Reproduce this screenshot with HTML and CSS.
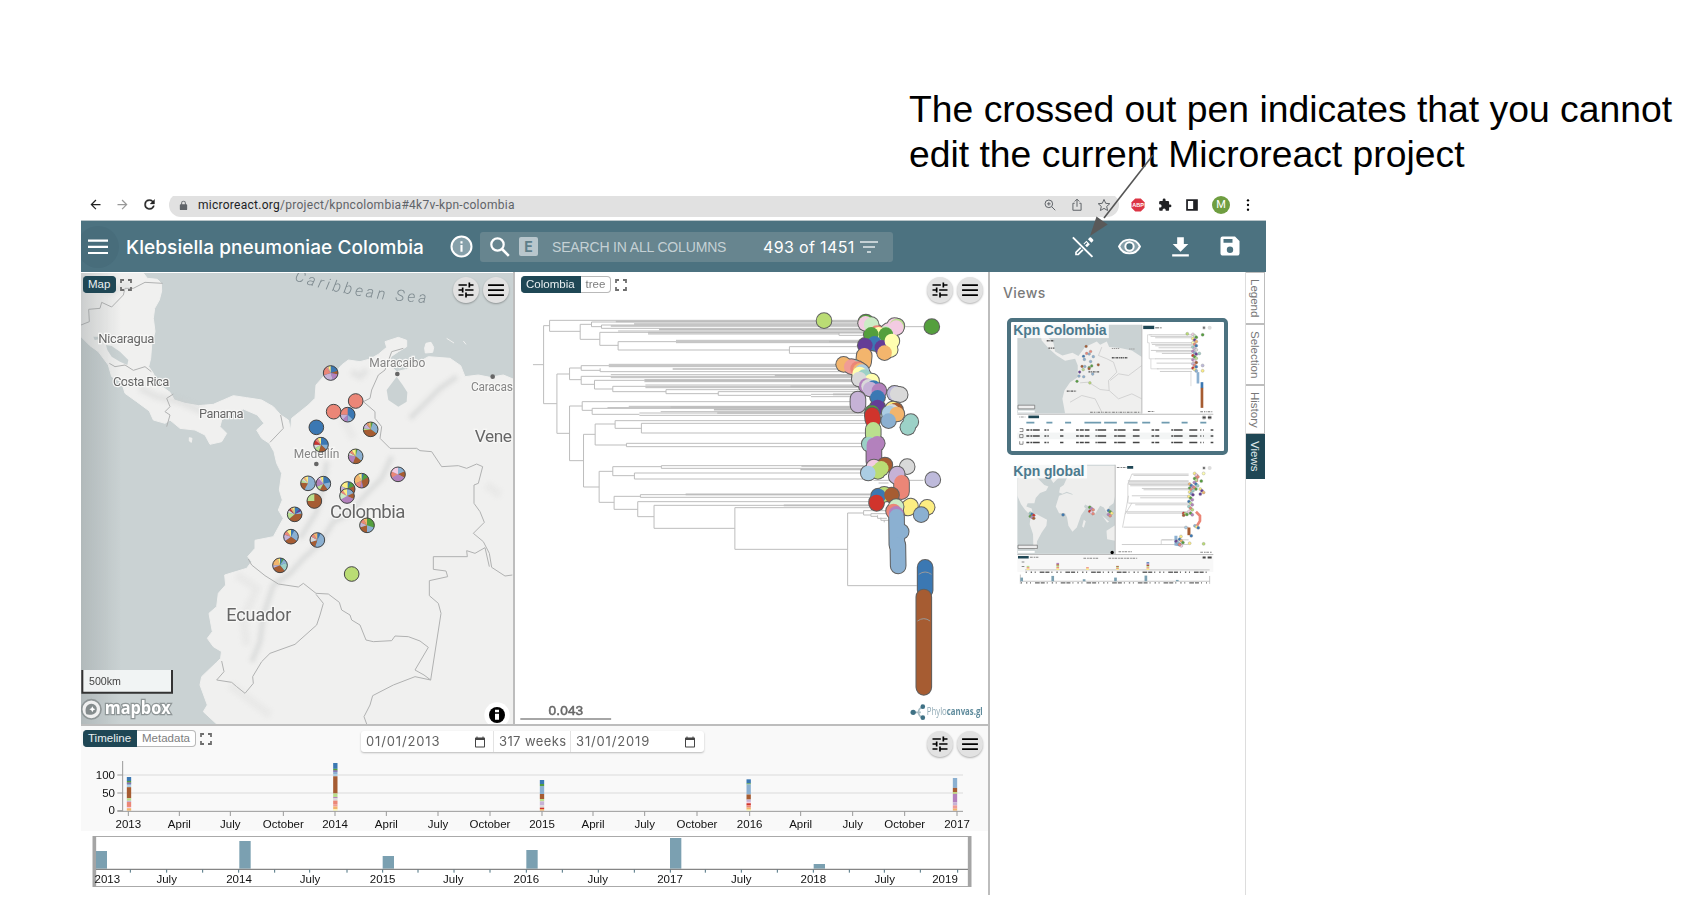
FILE: index.html
```html
<!DOCTYPE html>
<html lang="en">
<head>
<meta charset="utf-8">
<title>Klebsiella pneumoniae Colombia</title>
<link rel="stylesheet" href="styles.css">
</head>
<body>
<svg class="defs" width="0" height="0">
  <symbol id="tune" viewBox="0 0 24 24"><path d="M3 17v2h6v-2H3zM3 5v2h10V5H3zm10 16v-2h8v-2h-8v-2h-2v6h2zM7 9v2H3v2h4v2h2V9H7zm14 4v-2H11v2h10zm-6-4h2V7h4V5h-4V3h-2v6z"/></symbol>
  <symbol id="bars" viewBox="0 0 24 24"><path d="M2.500 5h19v2.200h-19zM2.500 11h19v2.200h-19zM2.500 17h19v2.200h-19z"/></symbol>
  <symbol id="expand" viewBox="0 0 12 12"><path d="M1 4V1h3M8 1h3v3M11 8v3H8M4 11H1V8" fill="none" stroke="#6e6e6e" stroke-width="1.800"/></symbol>
  <symbol id="cal" viewBox="0 0 24 24"><path d="M20 3h-1V1h-2v2H7V1H5v2H4c-1.100 0-2 .9-2 2v16c0 1.100.9 2 2 2h16c1.100 0 2-.9 2-2V5c0-1.100-.9-2-2-2zm0 18H4V8h16v13z"/></symbol>
</svg>
<main class="slide">
  <p class="note">The crossed out pen indicates that you cannot<br>edit the current Microreact project</p>
  <section class="window">
    <div class="chrome">
      <svg class="nav" viewBox="0 0 24 24"><path d="M20 11H7.800l5.600-5.600L12 4l-8 8 8 8 1.400-1.400L7.800 13H20z"/></svg>
      <svg class="nav dim" viewBox="0 0 24 24"><path d="M4 11h12.200l-5.600-5.600L12 4l8 8-8 8-1.400-1.400 5.600-5.600H4z"/></svg>
      <svg class="nav" viewBox="0 0 24 24"><path d="M17.650 6.350A7.960 7.960 0 0 0 12 4a8 8 0 1 0 7.730 10h-2.080A6 6 0 1 1 12 6c1.660 0 3.140.69 4.220 1.780L13 11h7V4z" stroke="#222" stroke-width=".6"/></svg>
      <div class="url">
        <svg class="lock" viewBox="0 0 24 24"><path d="M18 9h-1V6.500a5 5 0 0 0-10 0V9H6a2 2 0 0 0-2 2v9a2 2 0 0 0 2 2h12a2 2 0 0 0 2-2v-9a2 2 0 0 0-2-2zM9 6.500a3 3 0 0 1 6 0V9H9z"/></svg>
        <span class="address"><b>microreact.org</b>/project/kpncolombia#4k7v-kpn-colombia</span>
        <svg class="ui" viewBox="0 0 24 24"><circle cx="10" cy="10" r="6.500"/><path d="M15 15l6 6M7 10h6M10 7v6"/></svg>
        <svg class="ui" viewBox="0 0 24 24"><path d="M8 9H5v12h14V9h-3M12 15V2M8 6l4-4 4 4"/></svg>
        <svg class="ui" viewBox="0 0 24 24"><path d="M12 2.500l2.900 6.600 7 .7-5.300 4.700 1.600 7-6.200-3.700-6.200 3.700 1.600-7L2.100 9.800l7-.7z"/></svg>
      </div>
      <div class="ext">
        <svg viewBox="0 0 28 28"><path d="M8.500 1h11L27 8.500v11L19.500 27h-11L1 19.500v-11z" fill="#dc3545"/><text x="14" y="18" text-anchor="middle" class="abp">ABP</text></svg>
        <svg viewBox="0 0 24 24"><path d="M20.500 11H19V7a2 2 0 0 0-2-2h-4V3.500a2.500 2.500 0 0 0-5 0V5H4a2 2 0 0 0-2 2v3.800h1.500a2.700 2.700 0 0 1 0 5.400H2V20c0 1.100.9 2 2 2h3.800v-1.500a2.700 2.700 0 0 1 5.400 0V22H17a2 2 0 0 0 2-2v-4h1.500a2.500 2.500 0 0 0 0-5z" fill="#202124"/></svg>
        <svg viewBox="0 0 24 24"><path d="M2 2h20v20H2zM5 5v14h9V5z" fill="#202124" fill-rule="evenodd"/></svg>
        <span class="avatar">M</span>
        <svg viewBox="0 0 24 24"><circle cx="12" cy="4" r="2"/><circle cx="12" cy="12" r="2"/><circle cx="12" cy="20" r="2"/></svg>
      </div>
    </div>

    <header class="bar">
      <span class="menu"><svg viewBox="0 0 24 24"><path d="M2 4.500h20v2.200H2zM2 10.700h20v2.200H2zM2 16.900h20v2.200H2z"/></svg></span>
      <h1 class="title">Klebsiella pneumoniae Colombia</h1>
      <svg class="info" viewBox="0 0 24 24"><circle cx="12" cy="12" r="9.600" fill="#86a0aa" stroke="#fff" stroke-width="1.900"/><path d="M11 10.500h2V17h-2zM11 7h2v2h-2z"/></svg>
      <div class="search">
        <svg class="glass" viewBox="0 0 24 24"><circle cx="9.500" cy="9.500" r="6.200" fill="none" stroke="#fff" stroke-width="2.200"/><path d="M14 14l6.800 6.800" stroke="#fff" stroke-width="2.600"/></svg>
        <span class="ebox">E</span>
        <span class="ph">SEARCH IN ALL COLUMNS</span>
        <span class="count">493 of 1451</span>
        <svg class="filter" viewBox="0 0 24 24"><path d="M10 18h4v-2h-4v2zM3 6v2h18V6H3zm3 7h12v-2H6v2z"/></svg>
      </div>
      <div class="tools">
        <svg viewBox="0 0 24 24"><path d="M4 17.200V20.500h3.300L13 14.800 9.700 11.500zM12 9.300l3.300 3.300 2.800-2.800-3.300-3.300zM16.300 5l3.300 3.300 1.600-1.600a1 1 0 0 0 0-1.400L19.300 3.400a1 1 0 0 0-1.400 0z"/><path d="M5.700 18.800l5-5M13 10.600l2.200-2.200" stroke="#4c7280" stroke-width="1.300"/><path d="M2.200 3.200l18.800 18.800" stroke="#4c7280" stroke-width="4"/><path d="M1.800 3.200l18.800 18.800" stroke="#fff" stroke-width="1.800"/></svg>
        <svg viewBox="0 0 24 24"><path d="M2 12c2-4.400 5.600-6.600 10-6.600S20 7.600 22 12c-2 4.400-5.600 6.600-10 6.600S4 16.400 2 12z" fill="#86a0aa" stroke="#fff" stroke-width="1.900"/><circle cx="12" cy="12" r="4" fill="#4c7280" stroke="#fff" stroke-width="1.900"/></svg>
        <svg viewBox="0 0 24 24"><path d="M19.500 9.500h-4.300V3H8.800v6.500H4.500L12 17zM4 19.500v2h16v-2z"/></svg>
        <svg viewBox="0 0 24 24"><path d="M17 2.500H4.500a2 2 0 0 0-2 2v15c0 1.100.9 2 2 2h15a2 2 0 0 0 2-2V7zM12 19a3.200 3.200 0 1 1 0-6.400 3.200 3.200 0 0 1 0 6.400zm2.500-10.300h-9V4.900h9z" fill-rule="evenodd"/></svg>
      </div>
    </header>

    <div class="body">
      <div class="left">
        <div class="top">
          <div class="pane map">
            <svg class="fill" id="map" viewBox="33 264 1296 1353" preserveAspectRatio="none">
              <defs>
                <linearGradient id="shade"><stop offset="0" stop-color="#7d8587" stop-opacity=".32"/><stop offset="1" stop-color="#7d8587" stop-opacity="0"/></linearGradient>
                <filter id="soft"><feGaussianBlur stdDeviation="7"/></filter>
                <path id="sea" d="M672 286Q850 346 1120 356"/>
              </defs>
              <rect x="33" y="264" width="1296" height="1353" fill="#cad2d3"/>
              <path class="land" d="M33 264H220L232 280 262 283 274 295 275 318 268 345 254 370 250 400 255 440 245 480 242 520 236 545 250 565 262 595 300 622 313 645 345 655 385 662 430 658 460 645 490 632 530 638 575 645 610 665 632 690 655 705 662 735 665 700 690 680 715 660 735 640 738 600 760 575 800 558 815 540 835 525 870 530 900 522 925 508 950 487 945 470 985 457 1010 466 1010 485 985 500 963 515 958 540 980 560 1010 553 1045 532 1075 515 1140 520 1172 542 1185 575 1225 570 1260 577 1300 570 1329 582V1617H440L400 1580 412 1560 390 1500 395 1475 440 1432 452 1420 455 1395 480 1380 478 1396 462 1404 430 1385 412 1360 427 1340 417 1285 440 1265 445 1225 467 1200 464 1170 530 1150 545 1130 533 1115 555 1090 555 1066 610 1055 640 1000 625 975 637 945 628 915 635 865 620 835 612 800 598 775 575 760 560 735 582 715 562 690 520 672 490 685 455 705 450 725 470 745 455 770 420 778 405 750 375 735 330 730 300 705 285 715 250 705 238 678 200 650 165 625 155 592 125 575 115 540 85 500 60 482 33 455Z"/>
              <g filter="url(#soft)" fill="none" stroke="#c9cbcb" opacity=".55" stroke-linejoin="round">
                <path stroke-width="14" d="M965 815L935 880 880 935 840 985 790 1010 750 1075 700 1120 660 1165 610 1200 580 1290 570 1370 545 1430M770 830L760 900 740 980 690 1060M1160 575L1110 610 1060 660 1020 700"/>
                <path stroke-width="20" d="M845 560L870 575 890 555M210 610L260 635 330 650 400 680M60 290L120 320 180 295" opacity=".6"/>
                <path stroke-width="24" d="M500 1170L560 1210 520 1300 530 1380M480 1500L600 1590M820 700L850 760 M1250 900L1290 930" opacity=".3"/>
              </g>
              <path class="water" d="M980 575L950 615 955 645 985 665 1010 650 1012 622 998 600ZM108 480L125 483 150 500 175 525 172 540 150 530 125 515 112 495ZM70 455h14l4 8-14 2Z"/>
              <path class="land" d="M1068 475l15-3 8 15-3 15-22 2-2-15ZM1130 460l22 14M1180 468l8 10M358 758l8 2-2 12-6-4Z"/>
              <path class="border" d="M33 420L58 410 56 373 90 370 95 352 125 366 160 330 165 310 190 310 225 292 278 295M118 535L135 545 165 540 190 556 225 545 244 560M310 627L290 640 300 665 285 680 300 690 290 725M632 690L640 730 600 772M1000 490L965 500 945 555 925 570 905 615 900 640 880 650 915 680 915 700 935 725 930 760 960 790 1040 790 1050 797 1085 800 1115 845 1165 842 1190 850 1220 837 1238 845 1225 895 1212 900 1212 955 1230 980 1243 1012 1210 1045 1240 1070 1258 1105 1265 1147 1305 1173 1327 1170M1258 1145L1245 1088 1215 1105 1190 1097 1192 1115H1090V1153L1128 1158 1133 1175 1110 1180 1078 1187V1232L1105 1255 1113 1285 1082 1485 1062 1470 1035 1455 1075 1387 1050 1368 1015 1355 975 1353 965 1367 910 1370 888 1365 870 1320 845 1305 840 1290 815 1275 808 1252 775 1227 738 1225 700 1195 685 1206 625 1197 585 1172 545 1140 535 1122M738 1228L760 1255 750 1290 740 1320 675 1378 600 1405 575 1430 548 1475 550 1495 525 1525 500 1505 485 1492 440 1485 462 1460 455 1428M1082 1485L1035 1475 970 1500 908 1532 900 1560 882 1595 890 1617"/>
              <rect x="33" y="264" width="120" height="1353" fill="url(#shade)"/>
              <g class="maptext">
                <text x="85" y="475" font-size="39" textLength="168">Nicaragua</text>
                <text x="129" y="604" font-size="39" textLength="169">Costa Rica</text>
                <text x="387" y="700" font-size="39" textLength="134">Panama</text>
                <g class="lite"><text x="898" y="547" font-size="36" textLength="168">Maracaibo</text>
                <text x="1203" y="617" font-size="36" textLength="126">Caracas</text>
                <text x="671" y="818" font-size="36" textLength="137">Medellín</text></g>
                <text x="1214" y="770" font-size="52" textLength="112">Vene</text>
                <text x="780" y="1000" font-size="56" textLength="226">Colombia</text>
                <text x="469" y="1308" font-size="54" textLength="195">Ecuador</text>
              </g>
              <text class="seatext"><textPath href="#sea">Caribbean Sea</textPath></text>
              <g fill="#666"><circle cx="982" cy="567" r="7"/><circle cx="1268" cy="575" r="7"/><circle cx="739" cy="837" r="7"/></g>
              <g id="pies"></g>
              <path d="M37 1455V1523H306V1455" fill="#f4f6f6" fill-opacity=".92" stroke="#333" stroke-width="6"/>
              <text x="57" y="1499" class="km" textLength="96">500km</text>
              <circle cx="64" cy="1573" r="29" fill="#f0f0f0" stroke="#8f9697" stroke-width="5"/>
              <path d="M49 1588c-6-16 0-32 16-32a16 16 0 1 1-2 33q-8 1-14-1Z" fill="#858c8d"/><path d="M67 1564l3 6 6 3-6 3-3 6-3-6-6-3 6-3Z" fill="#fff"/>
              <text x="104" y="1586" class="mapbox" textLength="198" lengthAdjust="spacingAndGlyphs">mapbox</text>
              <rect x="1243" y="1552" width="76" height="76" rx="38" fill="#fff"/><circle cx="1281" cy="1590" r="24"/><path d="M1275 1586h12v18h-12zM1275 1574h12v8h-12z" fill="#fff"/>
            </svg>
            <div class="chips"><span class="chip on solo">Map</span><svg class="exp"><use href="#expand"/></svg></div>
            <div class="round"><span><svg><use href="#tune"/></svg></span><span><svg><use href="#bars"/></svg></span></div>
          </div>
          <div class="pane tree">
            <svg class="fill" viewBox="42 264 1422 1353" preserveAspectRatio="none">
              <g id="branches"></g><g id="leaves"></g>
              <text x="143" y="1590" class="scale" textLength="104">0.043</text>
              <path d="M58 1602H331" stroke="#888" stroke-width="5"/>
              <path d="M1242 1582H1262M1268 1566Q1255 1570 1255 1582T1268 1598" fill="none" stroke="#a9bdc5" stroke-width="5"/>
              <g fill="#3f7185"><circle cx="1239" cy="1582" r="8"/><circle cx="1268" cy="1565" r="7"/><circle cx="1268" cy="1598" r="7"/></g>
              <text x="1280" y="1591" class="phy" textLength="168" lengthAdjust="spacingAndGlyphs">Phylo<tspan>canvas.gl</tspan></text>
            </svg>
            <div class="chips"><span class="chip on">Colombia</span><span class="chip">tree</span><svg class="exp"><use href="#expand"/></svg></div>
            <div class="round"><span><svg><use href="#tune"/></svg></span><span><svg><use href="#bars"/></svg></span></div>
          </div>
        </div>
        <div class="pane timeline">
          <div class="controls">
            <div class="dates">
              <span class="date">01/01/2013<svg><use href="#cal"/></svg></span>
              <span class="weeks">317 weeks</span>
              <span class="date">31/01/2019<svg><use href="#cal"/></svg></span>
            </div>
          </div>
          <svg class="chart" id="chart" viewBox="33 135 2718 405"></svg>
          <div class="chips"><span class="chip on">Timeline</span><span class="chip">Metadata</span><svg class="exp"><use href="#expand"/></svg></div>
          <div class="round"><span><svg><use href="#tune"/></svg></span><span><svg><use href="#bars"/></svg></span></div>
        </div>
      </div>
      <aside class="views">
        <h2>Views</h2>
        <div class="card active">
          <svg viewBox="78 170 638 386">
            <rect x="97" y="178" width="373" height="266" fill="#cad2d3"/>
            <path fill="#efefee" d="M160 178H185L188 215 205 232 210 258 232 270 262 262 280 272 300 245 335 228 345 238 365 228 372 245 405 248 440 255 470 275V444H240L232 400 238 375 255 350 278 335 278 300 270 280 240 286 215 270 192 250 170 225Z"/>
            <path fill="none" stroke="#c4c4c4" stroke-width="2" d="M350 245L340 270 365 280 385 290 395 320 370 345 372 375 345 372 310 350 285 352M470 300L430 330 400 325 375 345M255 410L290 390 330 400 350 440M372 375L400 400 440 385 470 400"/>
            <g id="mini1"></g>
            <path d="M470 178V444" fill="none" stroke="#bbb" stroke-width="3"/><path d="M97 446H684" stroke="#bbb" stroke-width="3"/>
            <rect x="474" y="181" width="33" height="10" fill="#1f4755"/><path d="M510 187h20" stroke="#999" stroke-width="4" stroke-dasharray="12 3 4"/>
            <path d="M99 419H149V430H99Z" fill="#eee" stroke="#666" stroke-width="2"/>
            <path d="M99 438h50" stroke="#fff" stroke-width="6"/>
            <path d="M103 454h24" stroke="#999" stroke-width="3" stroke-dasharray="3 2 8"/><path d="M130 454h32" stroke="#1f4755" stroke-width="8"/>
            <path d="M488 438h20M645 439h36M315 440h150" stroke="#777" stroke-width="3" stroke-dasharray="8 3 4 2 2 3"/>
            <path d="M124 471h560" stroke="#6f9bb0" stroke-width="5" stroke-dasharray="24 36 18 38 18 40 50 9 38 22 40 14 24 34"/>
            <rect x="97" y="501" width="587" height="20" fill="#f3f5f5"/>
            <g stroke="#444" stroke-width="4.500" stroke-dasharray="9 3 6 2 20 14 6 3 4 34 10 38 8 3 12 3 14 18 4 2 26 24 8 2 24 22 20 36 8 3 12 36 6 2 26 20 24"><path d="M124 493h560"/><path d="M124 511h560"/><path d="M124 531h560"/></g>
            <path d="M104 489h10v9h-10M104 507h10v9h-10zM104 527v9h10v-9" fill="none" stroke="#555" stroke-width="2"/>
            <path d="M380 277h48M185 226h22M190 248h18M245 377h28M310 319h32" stroke="#555" stroke-width="4" stroke-dasharray="6 2 3 2"/>
            <path d="M380 249h24M432 251h18" stroke="#999" stroke-width="3" stroke-dasharray="4 2"/>
            <rect x="78" y="173" width="293" height="45" fill="#fff" opacity=".82"/>
            <text x="85" y="209" class="vlabel" textLength="279">Kpn Colombia</text>
            <g fill="#ddd"><circle cx="656" cy="187" r="6"/><circle cx="673" cy="187" r="6"/><circle cx="656" cy="456" r="7"/><circle cx="673" cy="456" r="7"/></g>
            <path d="M652 456h9M668 456h10M654 187h4" stroke="#444" stroke-width="6"/>
          </svg>
        </div>
        <div class="card">
          <svg viewBox="78 589 638 386">
            <rect x="97" y="597" width="293" height="267" fill="#cad2d3"/>
            <path fill="#eeeeed" d="M97 640L130 625 160 640 178 658 190 662 183 675 165 682 152 697 148 712 128 712 124 722 140 728 143 742 155 745 186 762 184 780 170 800 156 826 154 853 145 845 144 805 134 775 137 750 120 732 108 715 97 690ZM195 597H262L235 622 205 652 192 632ZM222 690L245 682 272 690 285 712 302 728 288 748 275 785 262 798 250 780 246 755 240 742 222 742 212 722ZM222 680L225 665 236 658 244 640 260 615 300 600H390V690L385 712 372 722 366 742 356 725 345 720 325 752 312 722 300 716 293 730 282 722 268 700 262 685 245 678 232 684ZM350 748L372 768 366 770ZM364 795L390 778V825L366 820ZM296 762l6 4-6 20-5-4Z"/>
            <g id="mini2"></g>
            <path d="M390 597V866M97 866H684" stroke="#bbb" stroke-width="3"/>
            <path d="M99 838H157V848H99Z" fill="#eee" stroke="#666" stroke-width="2"/><path d="M99 858h50" stroke="#fff" stroke-width="6"/><circle cx="381" cy="860" r="5"/>
            <rect x="97" y="868" width="587" height="50" fill="#f8f8f8"/>
            <path d="M395 605h30M400 858h40M645 859h36M135 874h25M295 877h45M370 877h86M110 888h10M110 902h10" stroke="#888" stroke-width="3" stroke-dasharray="8 3 5 2"/>
            <path d="M426 605h18M99 874h32" stroke="#1f4755" stroke-width="8"/>
            <path d="M120 912H673M105 946H673M106 926V954M673 930V954" stroke="#aaa" stroke-width="2"/>
            <path d="M122 919H675M108 951H665" stroke="#666" stroke-width="4" stroke-dasharray="3 12 4 8 3 12 14 3 12 6"/>
            <g id="minibars"></g>
            <rect x="78" y="594" width="228" height="44" fill="#fff" opacity=".82"/>
            <text x="85" y="630" class="vlabel" textLength="213">Kpn global</text>
            <g fill="#ddd"><circle cx="656" cy="607" r="6"/><circle cx="673" cy="607" r="6"/></g>
            <path d="M652 875h9M667 875h12M654 607h4" stroke="#444" stroke-width="6"/>
          </svg>
        </div>
      </aside>
      <nav class="tabs"><span class="t1">Legend</span><span class="t2">Selection</span><span class="t3">History</span><span class="t4">Views</span></nav>
    </div>
  </section>
  <svg class="arrow" viewBox="1080 140 90 105"><path d="M1153 155L1104 218" stroke="#555" stroke-width="1.600"/><path d="M1090 236L1096.500 216.500 1107.700 224.500Z" fill="#595959"/></svg>
</main>
<script src="script.js"></script>
</body>
</html>
```
FILE: styles.css
```css
* { box-sizing: border-box; }
body { margin: 0; background: #fff; font-family: "Liberation Sans", Arial, sans-serif; overflow: hidden; }
.defs { position: absolute; }
.slide { width: 1704px; height: 900px; position: relative; padding-left: 81px; }
.note { margin: 0; padding: 87px 0 0 828px; height: 196px; font-size: 37.300px; line-height: 45px; color: #000; white-space: nowrap; }
.arrow { position: absolute; left: 1080px; top: 140px; width: 90px; height: 105px; }
.window { width: 1185px; height: 699px; display: flex; flex-direction: column; overflow: hidden; }

.chrome { height: 25px; display: flex; align-items: flex-start; overflow: hidden; border-bottom: 1px solid #b9c5c9; }
.nav { width: 15px; height: 15px; margin: 1px 0 0 7px; fill: #222; }
.nav + .nav { margin-left: 12px; }
.nav.dim { fill: #999; }
.url { margin: -3px 0 0 12px; width: 950px; height: 24px; border-radius: 12px; background: #e1e1e1; display: flex; align-items: center; padding: 0 8px 0 9px; }
.lock { width: 11px; height: 11px; fill: #5f6368; }
.address { margin-left: 9px; font: 12px Roboto, sans-serif; letter-spacing: .27px; color: #5f6368; flex: 1; }
.address b { font-weight: 400; color: #202124; }
.ui { width: 14px; height: 14px; margin-left: 13px; fill: none; stroke: #5f6368; stroke-width: 1.700; }
.ext { display: flex; align-items: center; height: 18px; margin-left: 12px; gap: 13px; }
.ext svg { width: 14px; height: 14px; }
.ext svg:last-child { margin-left: -2px; }
.abp { font: bold 11px "Liberation Sans", sans-serif; fill: #fff; }
.avatar { width: 18px; height: 18px; border-radius: 50%; background: #6f9e41; color: #fff; font: 11px/18px Roboto, sans-serif; text-align: center; }

.bar { height: 51px; background: #4c7280; display: flex; align-items: center; color: #fff; fill: #fff; }
.menu { width: 42px; height: 42px; margin-left: -4px; border-radius: 50%; background: #486d7b; display: grid; place-items: center; }
.menu svg { width: 24px; height: 24px; }
.title { margin: 2px 0 0 7px; width: 323px; font: 450 19px Inter, sans-serif; letter-spacing: .08px; white-space: nowrap; }
.info { width: 25px; height: 25px; }
.search { margin-left: 6px; width: 413px; height: 30px; border-radius: 3px; background: #67858f; display: flex; align-items: center; padding: 0 12px 0 8px; }
.glass { width: 24px; height: 24px; }
.ebox { margin-left: 7px; width: 19px; height: 19px; border-radius: 2px; background: #b8c6cc; color: #5e7e89; font: bold 14px/19px Inter, sans-serif; text-align: center; }
.ph { margin-left: 14px; font-size: 14px; color: #c5d1d5; letter-spacing: -.16px; white-space: nowrap; width: 211px; }
.count { width: 94px; font: 400 16px Inter, sans-serif; white-space: nowrap; letter-spacing: .35px; }
.filter { width: 24px; height: 24px; fill: #c5d1d5; }
.tools { margin-left: auto; padding-right: 24px; display: flex; gap: 24px; }
.tools svg { width: 25px; height: 25px; }
.tools svg:nth-child(2) { margin: 0 2px 0 -3px; }
.tools svg:nth-child(4) { width: 24px; height: 24px; margin-left: 1px; }

.body { flex: 1; display: flex; min-height: 0; }
.left { width: 909px; border-right: 2px solid #bdbdbd; display: flex; flex-direction: column; }
.top { height: 454px; display: flex; border-bottom: 2px solid #bdbdbd; }
.pane { position: relative; }
.map { width: 434px; border-right: 2px solid #bdbdbd; padding-top: 1px; }
.tree { flex: 1; padding-top: 1px; }
.fill { display: block; width: 100%; height: 451px; }
.chips { position: absolute; left: 2px; top: 4px; height: 17px; display: flex; align-items: center; }
.tree .chips { left: 6px; }
.chip { height: 17px; padding: 0 5px; border: 1px solid #b9b9b9; border-left: 0; border-radius: 0 4px 4px 0; background: #fff; color: #7d7d7d; font-size: 11.500px; line-height: 14.500px; }
.chip.on { background: #1f4755; border-color: #1f4755; color: #e9eff1; border-radius: 4px 0 0 4px; padding: 0 5px; }
.chip.solo { border-radius: 4px; }
.exp { width: 12px; height: 12px; margin-left: 4px; }
.round { position: absolute; right: 4px; top: 5px; display: flex; gap: 4px; }
.tree .round, .timeline .round { right: 5px; }
.round span { width: 26px; height: 26px; border-radius: 50%; background: #e2e2e2; box-shadow: 0 1px 2px rgba(0,0,0,.3); display: grid; place-items: center; }
.round svg { width: 20px; height: 20px; }
.timeline { flex: 1; background: linear-gradient(#f9f9f9 105px, #fff 105px); }
.controls { height: 34px; padding: 5px 0 0 280px; }
.dates { width: 343px; height: 21px; background: #fff; border-radius: 3px; box-shadow: 0 1px 2px rgba(0,0,0,.25); display: flex; font: 13px/21px Inter, sans-serif; color: #616161; }
.date { width: 132px; padding: 0 7px 0 5px; display: flex; justify-content: space-between; align-items: center; letter-spacing: .85px; }
.date svg { width: 12px; height: 12px; fill: #444; }
.weeks { width: 78px; padding-left: 5px; border: 1px solid #e3e3e3; border-width: 0 1px; letter-spacing: .4px; }
.chart { display: block; width: 906px; height: 135px; }
.timeline .chips { top: 4px; }
.timeline .round { top: 5px; }

.views { width: 255px; padding: 0 17px; }
.views h2 { margin: 11px 0 0 -4px; height: 35px; font: 500 14px/20px Inter, sans-serif; letter-spacing: .4px; color: #7a7a7a; }
.card { width: 221px; height: 137px; border: 4px solid transparent; border-radius: 5px; margin-bottom: 3px; }
.card.active { border-color: #4c7280; }
.card svg { display: block; width: 213px; height: 129px; }
.vlabel { font: bold 42px "Liberation Sans", sans-serif; fill: #4c7a8e; }
.tabs { width: 20px; border-left: 1px solid #ddd; display: flex; flex-direction: column; }
.tabs span { writing-mode: vertical-rl; width: 19px; font: 11.500px/18px "Liberation Sans", sans-serif; color: #777; border: 1px solid #bdbdbd; border-left: 0; padding-top: 6px; }
.t1 { height: 52px; } .t2 { height: 61px; } .t3 { height: 49px; }
.tabs .t4 { height: 45px; background: #1f4755; border-color: #1f4755; color: #dfe8eb; }

.land { fill: #f0f0ef; stroke: #f0f0ef; stroke-width: 3; }
.water { fill: #cad2d3; }
.border { fill: none; stroke: #b0b1b1; stroke-width: 3; stroke-linejoin: round; }
.maptext { font-family: Roboto, sans-serif; font-weight: 400; fill: #666; stroke: #f7f7f6; stroke-width: 7; paint-order: stroke; }
.maptext .lite { fill: #858585; }
.seatext { font: italic 300 47px Roboto, sans-serif; letter-spacing: 9.500px; fill: #7f8b90; }
.km { font: 32px "Liberation Sans", sans-serif; fill: #444; }
.mapbox { font: bold 54px "Open Sans", sans-serif; fill: #fff; stroke: #8f9697; stroke-width: 8; paint-order: stroke; }
.scale { font: 41px "Liberation Sans", sans-serif; fill: #666; stroke: #666; stroke-width: 1.500; }
.phy { font: 31px "Open Sans", sans-serif; fill: #8fa9b4; }
.phy tspan { font-weight: 700; fill: #5f8b9c; }
.branch { fill: none; stroke: #bdbdbd; stroke-width: 3; }
.bundle { stroke-width: 5; }
.axis { font: 34.500px "Liberation Sans", sans-serif; fill: #111; text-anchor: middle; }
.axis.y { text-anchor: end; }
```
FILE: script.js
```js
const C = { b: '#3b78b3', l: '#8bb0d1', n: '#a65c32', p: '#b381bd', v: '#c6b2d6', s: '#eb8677', g: '#549f3d', y: '#fdee82',
  o: '#f3b56d', e: '#badf8e', t: '#9cd1c7', u: '#643d96', r: '#d0342c', k: '#f3cbe2', d: '#d9d9d9', m: '#ccebc5',
  c: '#abcde3', i: '#bebadb', f: '#ffffb0', h: '#badc74', a: '#f09c96' };
const by = id => document.getElementById(id);

// Pie markers: x, y, then slices as colour key + share
const pies = [
  [782, 564, 'b20n8p17v25s20a4y6'], [857, 648, 's1'], [791, 680, 's1'], [833, 689, 'b37l13p12v13s25'], [739, 727, 'b1'],
  [753, 779, 'b25l12n18e12d8r10s7y8'], [902, 733, 'g5l30n38e4v12s5o6'], [857, 814, 'g4l32n20p22d6s7y9'],
  [984, 868, 'l18n15p34s15k18'], [875, 887, 'b5g12n30p6s15o24y8'], [833, 912, 'b6g12n35e12v17y18'],
  [831, 933, 'l18n14p35m16s7y10'], [714, 895, 'l58n19e6d5o6y6'], [760, 896, 'b22l18n18e10p20k5y7'],
  [733, 948, 'n75e25'], [674, 988, 'b12u6l6n40e15d6r5o5y5'], [891, 1021, 'g30l20n20v12s10o8'],
  [663, 1055, 'b8l27n30v15s10y10'], [742, 1065, 'b8l47n15d13s8o9'], [630, 1141, 'b5g4l10t20n30v6o20y5'], [845, 1167, 'h1']
];
by('pies').innerHTML = pies.map(([x, y, s]) => {
  const parts = s.match(/[a-z]\d+/g).map(q => [C[q[0]], +q.slice(1)]);
  const total = parts.reduce((n, q) => n + q[1], 0);
  let at = 0, out = `<circle cx="${x}" cy="${y}" r="22" fill="${parts[0][0]}"/>`;
  if (parts.length > 1) parts.forEach(([c, n]) => {
    const a = at / total * 2 * Math.PI, z = (at + n) / total * 2 * Math.PI;
    at += n;
    out += `<path fill="${c}" d="M${x} ${y}L${x + 22 * Math.sin(a)} ${y - 22 * Math.cos(a)}A22 22 0 ${z - a > Math.PI ? 1 : 0} 1 ${x + 22 * Math.sin(z)} ${y - 22 * Math.cos(z)}Z"/>`;
  });
  return out + `<circle cx="${x}" cy="${y}" r="22" fill="none" stroke="#444" stroke-width="3"/>`;
}).join('');

// Tree skeleton: vertical joints (x, y1, y2) and horizontal edges (y, x1, x2)
const V = [[128, 422, 656], [146, 406, 439], [238, 418, 463], [272, 411, 425], [302, 420, 430], [297, 442, 481], [352, 470, 495],
  [867, 485, 505], [168, 567, 745], [206, 549, 584], [241, 542, 556], [298, 550, 560], [241, 574, 598], [281, 586, 612], [336, 604, 620],
  [496, 614, 626], [653, 620, 631], [206, 663, 827], [244, 650, 676], [274, 670, 688], [248, 748, 906], [283, 717, 780], [343, 707, 730],
  [422, 715, 744], [377, 775, 785], [295, 859, 952], [336, 845, 872], [482, 842, 850], [401, 864, 882], [340, 934, 973], [419, 929, 937],
  [411, 950, 995], [460, 961, 1030], [703, 968, 1093], [1042, 984, 1202], [1090, 977, 990], [1112, 986, 994], [1132, 991, 1000], [1142, 998, 1006], [1016, 442, 451], [1152, 1005, 1012]];
const H = [[539, 96, 128], [422, 128, 146], [406, 146, 1080], [439, 146, 238], [418, 238, 272], [411, 272, 1080], [425, 272, 302], [463, 238, 297],
  [420, 302, 1080], [430, 302, 1090], [442, 297, 1090], [438, 352, 1090], [447, 442, 1016], [451, 1016, 1100], [481, 297, 352], [470, 352, 1080], [466, 526, 1080], [473, 526, 1080], [495, 352, 867], [485, 867, 1090], [505, 867, 1080],
  [656, 128, 168], [567, 168, 206], [549, 206, 241], [542, 241, 1010], [556, 241, 298], [545, 324, 1020], [560, 298, 1040], [538, 324, 1010],
  [584, 206, 241], [574, 241, 1060], [598, 241, 281], [569, 330, 1060], [578, 330, 1060], [586, 281, 1060], [590, 431, 1060], [584, 431, 1060], [612, 281, 336],
  [604, 336, 1080], [600, 434, 1080], [608, 434, 1080], [620, 336, 496], [614, 496, 1080], [626, 496, 653], [620, 653, 1080], [631, 653, 932], [628, 932, 1070], [635, 932, 1070],
  [745, 168, 206], [663, 206, 244], [650, 244, 1055], [676, 244, 274], [670, 274, 1090], [664, 384, 1090], [668, 320, 1090], [688, 274, 416], [684, 416, 1090], [691, 416, 1090], [680, 480, 1090], [827, 206, 248],
  [748, 248, 283], [717, 283, 343], [707, 343, 1095], [730, 343, 422], [715, 422, 1095], [744, 422, 1095], [780, 283, 377], [775, 377, 1085], [785, 377, 1085],
  [906, 248, 295], [859, 295, 336], [845, 336, 482], [842, 482, 1090], [850, 482, 1090], [872, 336, 401], [864, 401, 1085], [882, 401, 1100], [894, 1135, 1165], [886, 1120, 1270],
  [952, 295, 340], [934, 340, 419], [929, 419, 1110], [937, 419, 1110], [973, 340, 411], [950, 411, 1110], [995, 411, 460], [961, 460, 1110],
  [1030, 460, 703], [968, 703, 1150], [1093, 703, 1042], [984, 1042, 1090], [977, 1090, 1160], [990, 1090, 1112], [986, 1112, 1160], [994, 1112, 1132], [1000, 1132, 1160], [1006, 1142, 1165], [1202, 1042, 1250], [425, 1215, 1270]];
// Bundles of near-parallel edges drawn as one heavier stroke
const dense = [[409, 345, 1080], [417, 400, 1080], [433, 475, 1090], [423, 330, 1090], [443, 442, 1090], [470, 986, 1080], [552, 516, 1030], [572, 823, 1060],
  [587, 434, 1060], [604, 870, 1080], [628, 998, 1070], [666, 510, 1095], [674, 640, 1095], [684, 650, 1095], [843, 903, 1090], [853, 900, 1085], [928, 555, 1110], [961, 850, 1110]];
by('branches').innerHTML =
  `<path class="branch" d="${V.map(([x, a, b]) => `M${x} ${a}V${b}`).join('')}${H.map(([y, a, b]) => `M${a} ${y}H${b}`).join('')}"/>` +
  `<path class="branch bundle" d="${dense.map(([y, a, b]) => `M${a} ${y}H${b}`).join('')}"/>`;

// Leaves: groups share one outline; inside a group later items cover earlier ones
const groups = [
  [['h', 971, 407]], [['g', 1295, 425]],
  [['g', 1097, 411], ['k', 1096, 415], ['m', 1113, 419], ['k', 1183, 422], ['e', 1190, 423], ['k', 1165, 437], ['k', 1188, 428], ['m', 1155, 445],
    ['s', 1130, 443], ['f', 1135, 448], ['g', 1113, 448], ['g', 1157, 449], ['b', 1123, 475], ['f', 1170, 494], ['u', 1145, 487], ['u', 1095, 481], ['f', 1175, 468],
    ['o', 1153, 503], ['o', 1092, 511, 1090, 532]],
  [['o', 1030, 538], ['t', 1062, 547], ['a', 1053, 545], ['s', 1072, 551], ['o', 1080, 556], ['c', 1085, 560], ['f', 1078, 567], ['t', 1092, 575], ['f', 1114, 588], ['d', 1077, 582],
    ['p', 1098, 602], ['d', 1105, 604], ['b', 1120, 608], ['v', 1110, 612], ['p', 1136, 617], ['b', 1132, 637], ['u', 1132, 666], ['g', 1116, 683]],
  [['v', 1073, 642, 1073, 660]],
  [['i', 1183, 625], ['d', 1191, 627], ['d', 1200, 629]],
  [['y', 1178, 672], ['n', 1186, 675], ['d', 1175, 679], ['c', 1167, 684], ['o', 1190, 687], ['l', 1165, 707]],
  [['t', 1232, 710], ['t', 1223, 727]],
  [['r', 1116, 690, 1118, 705], ['e', 1119, 733, 1119, 750], ['t', 1107, 777], ['p', 1131, 775], ['p', 1121, 780, 1121, 830]],
  [['n', 1154, 840], ['k', 1121, 846], ['h', 1143, 850], ['h', 1133, 859], ['c', 1104, 864]],
  [['d', 1221, 845]], [['i', 1298, 884]],
  [['v', 1191, 867, 1188, 874], ['s', 1204, 892, 1204, 920]],
  [['h', 1152, 928], ['b', 1135, 933], ['n', 1174, 930], ['r', 1129, 951, 1129, 955]],
  [['y', 1281, 967]], [['y', 1231, 963, 1224, 969]], [['l', 1263, 989]],
  [['m', 1188, 965], ['s', 1180, 978], ['p', 1188, 985], ['l', 1203, 1040], ['l', 1189, 994, 1190, 1080], ['l', 1193, 1080, 1194, 1143]],
  [['b', 1275, 1147, 1275, 1216]], [['n', 1271, 1236, 1271, 1507]]
];
const cap = ([c, x, y, x2, y2], col, w) =>
  `<path d="M${x} ${y}L${(x2 || x) + .01} ${y2 || y}" stroke="${col || C[c]}" stroke-width="${w}" stroke-linecap="round"/>`;
by('leaves').innerHTML = groups.map(g => g.map(q => cap(q, '#606060', 50)).join('') + g.map(q => cap(q, '', 44)).join('')).join('') +
  '<path d="M1256 1168q19-14 38 0M1252 1308q19-14 38 0" fill="none" stroke="#9a9a9a" stroke-width="3"/>';

// Timeline charts
let s = '';
const line = (x1, y1, x2, y2, c, w) => { s += `<path d="M${x1} ${y1}L${x2} ${y2}" stroke="${c}" stroke-width="${w}"/>`; };
const rect = (x, y, w, h, c) => { s += `<rect x="${x}" y="${y}" width="${w}" height="${h}" fill="${c}"/>`; };
const label = (x, y, t, k = '') => { s += `<text class="axis ${k}" x="${x}" y="${y}">${t}</text>`; };
line(158, 180, 2679, 180, '#e4e4e4', 4); line(158, 234, 2679, 234, '#e4e4e4', 4);
[[177, 'b13g5u4l5c6n36e8v4s16k4o8'], [796, 'b18g5u4l7c7n53e11p4d7s11a7o9f4'], [1416, 'b12g6l24n15e7v12d7r4o5'], [2036, 'b12g3l30n15v7k4r6s7o6f3'], [2655, 'l30n13h5p26v9a10o6']].forEach(([x, q], i) => {
  let y = [186, 144, 195, 193, 189][i];
  const parts = q.match(/[a-z]\d+/g), total = parts.reduce((n, z) => n + +z.slice(1), 0), f = (287 - y) / total;
  parts.forEach(z => { const h = z.slice(1) * f; rect(x - 6.500, y, 13, h, C[z[0]]); y += h; });
});
line(158, 138, 158, 289, '#999', 3); line(142, 289, 2679, 289, '#999', 3);
[[180, 100], [234, 50], [287, 0]].forEach(([y, t]) => { line(142, y, 158, y, '#999', 3); label(135, y + 11, t, 'y'); });
[175, 328, 481, 640, 795, 949, 1104, 1260, 1416, 1569, 1724, 1881, 2039, 2192, 2348, 2504, 2661].forEach((x, i) => {
  line(x, 289, x, 303, '#999', 3); label(x, 340, i % 4 ? ['', 'April', 'July', 'October'][i % 4] : 2013 + i / 4);
});
rect(70, 363, 2632, 153, '#aaa'); rect(78, 366, 2616, 147, '#fff');
line(73, 363, 73, 516, '#a5a5a5', 11); line(2699, 363, 2699, 516, '#a5a5a5', 11);
[[78, 408, 33], [508, 378, 34], [938, 423, 34], [1369, 405, 34], [1800, 369, 34], [2231, 447, 34]].forEach(([x, y, w]) => rect(x, y, w, 461 - y, '#7ba0b1'));
line(78, 463, 2694, 463, '#858585', 4);
[181, 290, 398, 506, 614, 719, 831, 938, 1044, 1152, 1260, 1369, 1477, 1585, 1693, 1801, 1906, 2014, 2122, 2230, 2338, 2443, 2551, 2663].forEach(x => line(x, 464, x, 473, '#4c7280', 3));
[[112, 2013], [290, 'July'], [507, 2014], [720, 'July'], [938, 2015], [1150, 'July'], [1369, 2016], [1583, 'July'], [1800, 2017], [2014, 'July'], [2230, 2018], [2444, 'July'], [2625, 2019]].forEach(([x, t]) => label(x, 504, t));
by('chart').innerHTML = s;

// Saved view previews
const dot = (x, y, c, r = 4.500) => `<circle cx="${x}" cy="${y}" r="${r}" fill="${C[c]}" stroke="#888" stroke-width="1"/>`;
const run = (list, x, y, step) => [...list].map((c, i) => dot(x + (i * 7 % 3 - 1) * 5, y + i * step, c)).join('');
const rows = (list, end) => list.map(([x, y]) => `<path d="M${x} ${y}H${end}" stroke="#b5b5b5" stroke-width="2"/>`).join('');
by('mini1').innerHTML = pies.map(([x, y, q]) => dot(303 + (x - 782) * .18, 243 + (y - 564) * .181, q.match(/[a-z]/g)[q.length > 3 ? 1 : 0], 4)).join('') +
  rows([[492, 208], [496, 213], [510, 217], [497, 232], [500, 237], [510, 241], [520, 247], [497, 255], [512, 259], [530, 264], [510, 280], [514, 293], [515, 310], [524, 318]], 620) +
  '<path d="M487 232V208H500M487 232H492V280H512M497 280V310H520M617 320V362" fill="none" stroke="#ccc" stroke-width="2"/>' +
  dot(606, 205, 'h') + dot(652, 208, 'g') + run('kmgyuofsbtvdplurgepknvsbryl', 628, 207, 4.200) + dot(642, 264, 't') + dot(652, 300, 'i') + dot(652, 316, 'y') +
  `<path d="M638 320V354" stroke="${C.l}" stroke-width="8"/><path d="M650 350V368" stroke="${C.b}" stroke-width="8"/><path d="M650 367V427" stroke="${C.n}" stroke-width="8"/>`;
by('mini2').innerHTML = run('tbrgpn', 141, 742, 3) + dot(234, 747, 'b') + run('gpsrks', 319, 724, 4) + run('bgyps', 375, 734, 4) +
  rows([[440, 625], [445, 629], [428, 645], [430, 648], [428, 652], [430, 656], [435, 660], [470, 668], [475, 672], [440, 690], [465, 696], [430, 712], [450, 717], [422, 738], [425, 742], [415, 784], [410, 836], [530, 822]], 610) +
  '<path d="M440 625L428 655V712M430 690L412 785M440 712L420 745M528 836V822H560" fill="none" stroke="#c4c4c4" stroke-width="2"/>' +
  `<path d="M634 625V648" stroke="${C.s}" stroke-width="9"/>` + run('yksge', 633, 623, 5) + run('obpgstylu', 618, 655, 4) + run('pbtsg', 632, 650, 5) + run('yuou', 650, 670, 5) + run('ygpbeptshkgp', 616, 692, 5) + run('rhgn', 600, 742, 2) +
  `<path d="M632 738L644 750V765L635 780" fill="none" stroke="${C.s}" stroke-width="8"/>` + run('lyb', 634, 780, 3) + dot(602, 785, 'c') + `<path d="M611 785V808" stroke="${C.n}" stroke-width="9"/><path d="M572 810V835L590 838" fill="none" stroke="${C.l}" stroke-width="9"/>` +
  dot(655, 623, 'f') + dot(648, 646, 'g') + dot(655, 834, 'h') + dot(587, 812, 'y') + dot(613, 832, 'y') + dot(618, 810, 'b') + run('boguk', 588, 820, 5) + run('uls', 578, 826, 5);
const stack = (x, n, top) => [...'bpnesy'].slice(-n).map((c, i) => `<rect x="${x}" y="${top + i * (912 - top) / n}" width="8" height="${(912 - top) / n}" fill="${C[c]}"/>`).join('');
by('minibars').innerHTML = stack(125, 3, 900) + stack(214, 5, 891) + stack(303, 2, 904) + stack(393, 4, 900) + stack(484, 6, 889) +
  [[106, 935], [199, 930], [293, 940], [387, 935], [478, 929], [572, 942]].map(([x, y]) => `<rect x="${x}" y="${y}" width="8" height="${946 - y}" fill="#7ba0b1"/>`).join('');
```
